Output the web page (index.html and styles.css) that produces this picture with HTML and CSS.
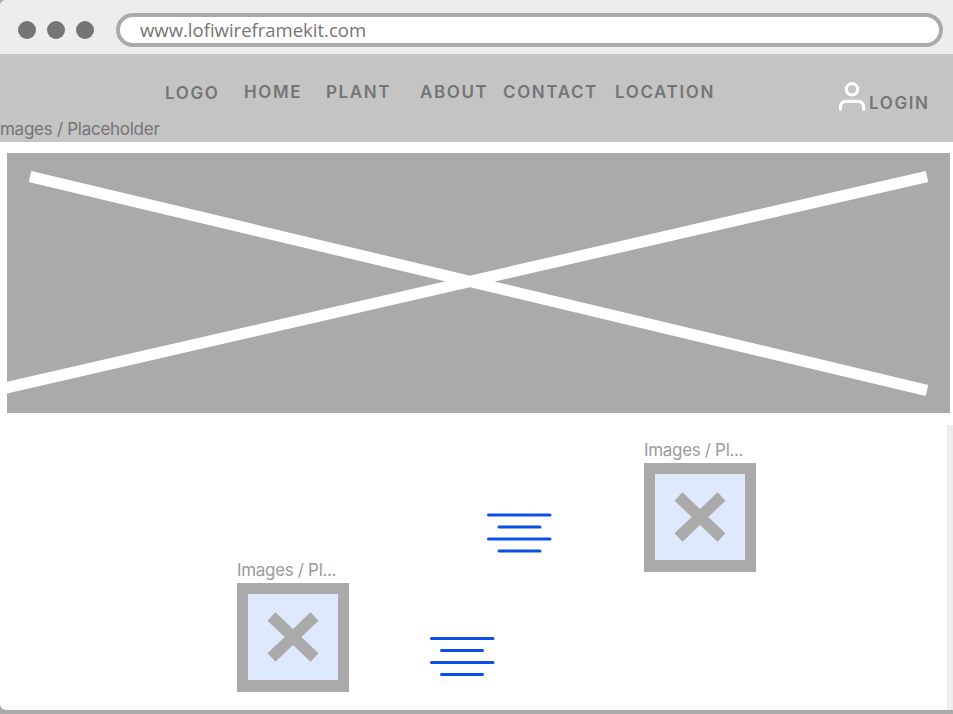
FILE: index.html
```html
<!DOCTYPE html>
<html lang="en">
<head>
<meta charset="utf-8">
<title>Wireframe</title>
<link rel="stylesheet" href="styles.css">
</head>
<body>
<div class="browser">
  <header class="chrome">
    <span class="dot"></span><span class="dot"></span><span class="dot"></span>
    <div class="address"><span class="url">www.lofiwireframekit.com</span></div>
  </header>
  <nav class="nav">
    <div class="links">
      <a class="logo">LOGO</a><a>HOME</a><a>PLANT</a><a>ABOUT</a><a>CONTACT</a><a>LOCATION</a>
      <div class="login">
        <svg class="user" width="28" height="30" viewBox="0 0 28 30"><circle cx="14" cy="7.3" r="5.7"/><path d="M2.500 27.300v-2.800a5.200 5.200 0 0 1 5.200-5.200h12.600a5.200 5.200 0 0 1 5.200 5.200v2.800"/></svg>
        <a>LOGIN</a>
      </div>
    </div>
    <div class="caption">mages / Placeholder</div>
  </nav>
  <section class="hero">
    <svg width="943" height="260" viewBox="7 153 943 260"><path d="M30 176.5L927 390.5M927 176.5L1 389"/></svg>
  </section>
  <main class="content">
    <div class="lane">
      <div class="row first">
        <svg class="lines" width="66" height="42" viewBox="0 0 66 42"><path d="M2.500 3h61.500M13 15h41M2.500 27h61.500M13 39h41"/></svg>
        <figure class="card">
          <figcaption>Images / Pl...</figcaption>
          <div class="frame"><svg width="52" height="50" viewBox="0 0 52 50"><path d="M4.500 4.500L47.500 45.500M47.500 4.500L4.500 45.500"/></svg></div>
        </figure>
      </div>
      <div class="row second">
        <figure class="card">
          <figcaption>Images / Pl...</figcaption>
          <div class="frame"><svg width="52" height="50" viewBox="0 0 52 50"><path d="M4.500 4.500L47.500 45.500M47.500 4.500L4.500 45.500"/></svg></div>
        </figure>
        <svg class="lines" width="66" height="42" viewBox="0 0 66 42"><path d="M2.500 3.500h61.500M12.500 15.500h41M2.500 27.500h61.500M12.500 39.500h41"/></svg>
      </div>
    </div>
    <div class="scrollbar"></div>
  </main>
</div>
</body>
</html>
```
FILE: styles.css
```css
* { box-sizing: border-box; }
body { margin: 0; background: #aaa; font-family: Inter, sans-serif; color: #757575; }
.browser { width: 953px; height: 710px; overflow: hidden; background: #fff; border-radius: 6px 0 0 6px; display: flex; flex-direction: column; }
.chrome { height: 54px; flex: none; background: #ededed; display: flex; align-items: center; padding: 6px 0 0 18px; gap: 11px; }
.dot { width: 18px; height: 18px; border-radius: 50%; background: #757575; }
.address { width: 827px; height: 34px; margin-left: 11px; border: 4px solid #aaa; border-radius: 17px; background: #fff; padding-left: 20px; display: flex; align-items: center; }
.url { font: 18.5px/26px "Open Sans", sans-serif; white-space: nowrap; }
.nav { height: 88px; flex: none; background: #c4c4c4; }
.links { height: 64px; display: grid; grid-template-columns: 79px 82px 94px 83px 112px 223px 115px; padding: 28px 0 0 165px; font-size: 17px; line-height: 21px; font-weight: 600; letter-spacing: 1.6px; white-space: nowrap; }
.logo { margin-top: 1px; }
.login { display: flex; gap: 3px; }
.login a { margin-top: 11px; }
.user { flex: none; fill: none; stroke: #fff; stroke-width: 3.2; stroke-linecap: round; }
.caption { font-size: 17px; line-height: 22px; letter-spacing: -0.27px; white-space: nowrap; }
.hero { flex: none; width: 943px; height: 260px; margin: 11px 0 0 7px; background: #aaa; }
.hero svg { display: block; fill: none; stroke: #fff; stroke-width: 11.3; }
.content { flex: 1; display: flex; padding-top: 12px; }
.lane { flex: 1; }
.scrollbar { width: 6px; background: #ededed; }
.row { display: flex; }
.first { padding: 14px 0 0 486px; }
.first .lines { margin: 73px 92px 0 0; }
.second { margin-top: -13px; padding-left: 237px; }
.second .lines { margin: 76px 0 0 80px; }
.lines { flex: none; fill: none; stroke: #0a50e8; stroke-width: 3; stroke-linecap: round; }
.card { margin: 0; width: 112px; }
figcaption { font-size: 17px; line-height: 22px; letter-spacing: -0.32px; color: #9b9b9b; white-space: nowrap; }
.frame { width: 112px; height: 109px; margin-top: 2px; border: 11px solid #aaa; border-bottom-width: 12px; background: #dfe9fe; display: grid; place-items: center; }
.frame svg { fill: none; stroke: #aaa; stroke-width: 11.500; }
```
